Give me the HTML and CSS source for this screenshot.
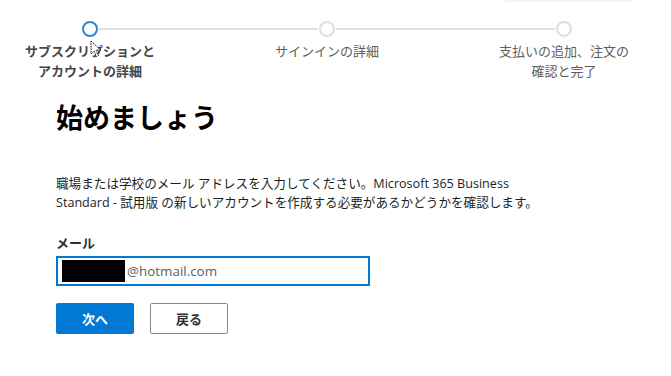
FILE: index.html
```html
<!DOCTYPE html>
<html lang="ja">
<head>
    <meta charset="UTF-8">
    <meta name="viewport" content="width=device-width, initial-scale=1.0">
    <title>Microsoft 365 Business Standard - 試用版</title>
    <link rel="stylesheet" href="styles.css">
</head>
<body>
    <div class="top-shadow"></div>

    <ol class="stepper">
        <li class="step active">
            <span class="dot"></span>
            <span class="step-label">サブスクリプションと<br>アカウントの詳細</span>
        </li>
        <li class="step">
            <span class="dot"></span>
            <span class="step-label">サインインの詳細</span>
        </li>
        <li class="step">
            <span class="dot"></span>
            <span class="step-label">支払いの追加、注文の<br>確認と完了</span>
        </li>
    </ol>

    <main class="signup">
        <h1>始めましょう</h1>
        <p class="intro">職場または学校のメール アドレスを入力してください。Microsoft 365 Business Standard - 試用版 の新しいアカウントを作成する必要があるかどうかを確認します。</p>

        <label class="field-label" for="email">メール</label>
        <div class="email-box" id="email">
            <span class="redacted"></span><span class="email-text">@hotmail.com</span>
        </div>

        <div class="actions">
            <button class="btn btn-primary">次へ</button>
            <button class="btn btn-secondary">戻る</button>
        </div>
    </main>

    <!-- mouse pointer left in the capture -->
    <svg class="pointer" width="12" height="18" viewBox="0 0 12 18">
        <path d="M1 1 L1 14 L4 11 L6.5 16.5 L8.5 15.5 L6 10 L10.5 10 Z" fill="#fff" stroke="#111" stroke-width="1" stroke-dasharray="1.5 1"/>
    </svg>
</body>
</html>
```

FILE: styles.css
```css
body, html {
    margin: 0;
    padding: 0;
    background-color: #fff;
    color: #323130;
    font-family: "Open Sans", "Noto Sans CJK JP", sans-serif;
}

body {
    position: relative;
    height: 376px;
    overflow: hidden;
}

.top-shadow {
    position: absolute;
    top: 0;
    left: 505px;
    width: 128px;
    height: 3px;
    background: linear-gradient(#f0f0f0, #fff);
}

/* progress steps */
.stepper {
    list-style: none;
    margin: 0;
    padding: 21px 0 0 0;
    display: flex;
    gap: 57px;
}

.step {
    position: relative;
    width: 180px;
    display: flex;
    flex-direction: column;
    align-items: center;
}

.step:not(:last-child)::after {
    content: "";
    position: absolute;
    top: 7px;
    left: calc(50% + 9px);
    width: calc(100% + 57px - 18px);
    height: 2px;
    background-color: #e1dfdd;
}

.dot {
    width: 12px;
    height: 12px;
    border: 2px solid #e1dfdd;
    border-radius: 50%;
    background: #fff;
}

.step.active .dot {
    border-color: #2b88d8;
}

.step-label {
    margin-top: 4px;
    font-size: 13px;
    line-height: 20px;
    text-align: center;
    color: #605e5c;
    white-space: nowrap;
}

.step.active .step-label {
    font-weight: 700;
    color: #484644;
}

/* form */
.signup {
    padding: 0 0 0 56px;
}

h1 {
    margin: 19px 0 0 0;
    font-size: 27px;
    line-height: 36px;
    font-weight: 700;
    color: #000;
}

.intro {
    margin: 38px 0 0 0;
    width: 490px;
    font-size: 12.6px;
    line-height: 19px;
    color: #201f1e;
}

.field-label {
    display: block;
    margin-top: 21px;
    font-size: 13px;
    line-height: 20px;
    font-weight: 700;
    color: #323130;
}

.email-box {
    margin-top: 3px;
    width: 306px;
    height: 26px;
    border: 2px solid #0078d4;
    display: flex;
    align-items: center;
    padding-left: 4px;
}

.redacted {
    width: 63px;
    height: 22px;
    background: #000;
}

.email-text {
    margin-left: 2px;
    font-size: 13.4px;
    color: #605e5c;
}

.actions {
    display: flex;
    gap: 16px;
    margin-top: 17px;
}

.btn {
    width: 78px;
    height: 31px;
    font-family: inherit;
    font-size: 13px;
    font-weight: 700;
    cursor: pointer;
    border-radius: 2px;
}

.btn-primary {
    background-color: #0078d4;
    border: none;
    color: #fff;
}

.btn-secondary {
    background-color: #fff;
    border: 1px solid #8a8886;
    color: #323130;
}

.pointer {
    position: absolute;
    left: 90px;
    top: 40px;
}
```
